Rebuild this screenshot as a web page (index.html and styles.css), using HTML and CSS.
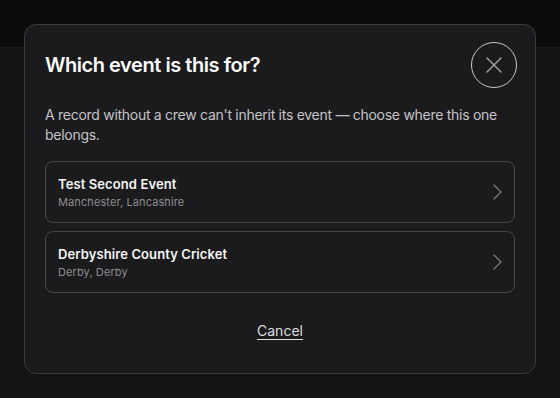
FILE: index.html
```html
<!DOCTYPE html>
<html lang="en">
<head>
<meta charset="utf-8">
<title>Which event is this for?</title>
<link rel="stylesheet" href="styles.css">
</head>
<body>
<div class="topbar"></div>
<div class="modal" role="dialog">
  <div class="modal-header">
    <h2 class="modal-title">Which event is this for?</h2>
    <button class="close-btn" aria-label="Close">
      <svg width="18" height="18" viewBox="0 0 18 18" fill="none" stroke="currentColor" stroke-width="1.4" stroke-linecap="round"><path d="M2 2L16 16M16 2L2 16"/></svg>
    </button>
  </div>
  <p class="modal-desc">A record without a crew can't inherit its event — choose where this one belongs.</p>
  <div class="event-list">
    <button class="event-card">
      <span class="event-text">
        <span class="event-name">Test Second Event</span>
        <span class="event-loc">Manchester, Lancashire</span>
      </span>
      <svg class="chev" width="9" height="16" viewBox="0 0 9 16" fill="none" stroke="currentColor" stroke-width="1.3" stroke-linecap="round" stroke-linejoin="round"><path d="M1 1L8 8L1 15"/></svg>
    </button>
    <button class="event-card">
      <span class="event-text">
        <span class="event-name">Derbyshire County Cricket</span>
        <span class="event-loc">Derby, Derby</span>
      </span>
      <svg class="chev" width="9" height="16" viewBox="0 0 9 16" fill="none" stroke="currentColor" stroke-width="1.3" stroke-linecap="round" stroke-linejoin="round"><path d="M1 1L8 8L1 15"/></svg>
    </button>
  </div>
  <div class="modal-footer">
    <button class="cancel-btn">Cancel</button>
  </div>
</div>
</body>
</html>
```
FILE: styles.css
```css
* { box-sizing: border-box; }
html, body {
  margin: 0;
  height: 100%;
}
body {
  background: #131315;
  font-family: Inter, "Noto Sans", sans-serif;
  color: #fff;
  overflow: hidden;
}
.topbar {
  height: 48px;
  background: #0b0b0c;
  border-bottom: 1px solid #151a20;
}
.modal {
  position: absolute;
  left: 24px;
  top: 24px;
  width: 512px;
  height: 350px;
  background: #1b1b1d;
  border: 1px solid #3b3b3e;
  border-radius: 12px;
  padding: 17px 20px 20px;
  display: flex;
  flex-direction: column;
}
.modal-header {
  display: flex;
  align-items: center;
  justify-content: space-between;
  height: 46px;
}
.modal-title {
  margin: 0;
  font-size: 20px;
  font-weight: 600;
  letter-spacing: -0.45px;
  color: #fafafa;
}
.close-btn {
  width: 46px;
  height: 46px;
  border-radius: 50%;
  border: 1px solid #c9c9cc;
  background: transparent;
  color: #a9a9ad;
  display: flex;
  align-items: center;
  justify-content: center;
  padding: 0;
  margin-right: -2px;
}
.modal-desc {
  margin: 17px 0 0;
  font-size: 14px;
  line-height: 20px;
  letter-spacing: -0.28px;
  color: #c4c4c8;
}
.event-list {
  margin-top: 16px;
  display: flex;
  flex-direction: column;
  gap: 8px;
}
.event-card {
  display: flex;
  align-items: center;
  justify-content: space-between;
  height: 62px;
  padding: 0 12px;
  background: transparent;
  border: 1px solid #47474b;
  border-radius: 8px;
  font-family: inherit;
  text-align: left;
  color: inherit;
}
.event-text {
  display: flex;
  flex-direction: column;
  gap: 1px;
}
.event-name {
  font-size: 13px;
  line-height: 18px;
  font-weight: 600;
  letter-spacing: 0.1px;
  color: #f5f5f5;
}
.event-loc {
  font-size: 11px;
  line-height: 16px;
  letter-spacing: 0.1px;
  color: #8c8c91;
}
.chev {
  color: #7a7a7f;
}
.modal-footer {
  display: flex;
  justify-content: center;
  margin-top: 28px;
}
.cancel-btn {
  background: none;
  border: none;
  padding: 0;
  font-family: inherit;
  font-size: 14px;
  line-height: 20px;
  color: #dcdcdf;
  text-decoration: underline;
  text-underline-offset: 3px;
}
```
